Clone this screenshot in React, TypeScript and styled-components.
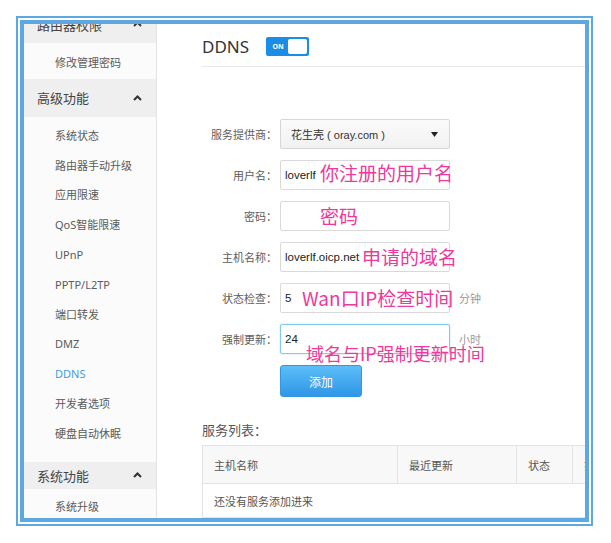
import React from "react";
import styled, { createGlobalStyle } from "styled-components";

const GlobalStyle = createGlobalStyle`
  html, body {
    margin: 0;
    padding: 0;
    background: #fff;
  }
  body {
    font-family: "Noto Sans", "Noto Sans CJK SC", sans-serif;
  }
  * {
    box-sizing: border-box;
  }
`;

const Frame = styled.div`
  margin: 16px 0 0 16px;
  width: 577px;
  height: 510px;
  border: 2px solid #5ca8e3;
  padding: 2px;
  background: #fff;
`;

const Screen = styled.div`
  height: 100%;
  border: 4px solid #5ca8e3;
  display: flex;
  overflow: hidden;
`;

const Sidebar = styled.nav`
  width: 133px;
  flex: none;
  border-right: 1px solid #e4e4e4;
  background: #fbfbfb;
  overflow: hidden;
`;

const MenuList = styled.div`
  margin-top: -19px;
`;

const GroupHead = styled.div<{ $h: number }>`
  height: ${(p) => p.$h}px;
  background: #efefef;
  display: flex;
  align-items: center;
  justify-content: space-between;
  padding: 0 14px 0 13px;
  font-family: "Noto Sans CJK SC", sans-serif;
  font-size: 13px;
  color: #444;
`;

const SubList = styled.div<{ $pt: number; $pb: number }>`
  padding: ${(p) => p.$pt}px 0 ${(p) => p.$pb}px;
`;

const SubItem = styled.div<{ $active?: boolean }>`
  height: 29.8px;
  line-height: 29.8px;
  padding-left: 31px;
  font-family: "Noto Sans", "Noto Sans CJK SC", sans-serif;
  font-size: 11px;
  color: ${(p) => (p.$active ? "#3b9be6" : "#5a5a5a")};
`;

const Main = styled.main`
  flex: 1;
  min-width: 0;
  padding-left: 45px;
  overflow: hidden;
`;

const TitleBar = styled.div`
  height: 43px;
  display: flex;
  align-items: center;
  gap: 17px;
  padding-top: 2px;
  border-bottom: 1px solid #e8e8e8;
`;

const Title = styled.h1`
  margin: 0;
  font-family: "Noto Sans", sans-serif;
  font-size: 17px;
  font-weight: 400;
  color: #333;
`;

const Toggle = styled.div`
  width: 43px;
  height: 19px;
  background: #1c8de6;
  border-radius: 2px;
  display: flex;
  align-items: center;
  padding: 2px;
`;

const ToggleText = styled.span`
  width: 20px;
  text-align: center;
  font-family: "Noto Sans", sans-serif;
  font-size: 7px;
  font-weight: 700;
  color: #fff;
`;

const Knob = styled.span`
  flex: 1;
  align-self: stretch;
  background: #fff;
  border-radius: 2px;
`;

const Form = styled.div`
  margin-top: 52px;
  display: flex;
  flex-direction: column;
  gap: 11px;
`;

const Row = styled.div`
  height: 30px;
  display: flex;
  align-items: center;
`;

const Label = styled.label`
  width: 75px;
  text-align: right;
  font-family: "Noto Sans CJK SC", sans-serif;
  font-size: 11px;
  color: #5c5c5c;
`;

const Field = styled.div`
  position: relative;
  width: 170px;
  height: 100%;
  margin-left: 3px;
`;

const Input = styled.div<{ $focus?: boolean }>`
  height: 100%;
  border: 1px solid ${(p) => (p.$focus ? "#82cdec" : "#d9d9d9")};
  box-shadow: ${(p) => (p.$focus ? "0 0 2px rgba(102,175,233,0.5)" : "none")};
  border-radius: 2px;
  background: #fff;
  padding-left: 4px;
  display: flex;
  align-items: center;
  font-family: "Liberation Sans", sans-serif;
  font-size: 11.5px;
  color: #222;
`;

const Select = styled.div`
  height: 100%;
  border: 1px solid #d6d6d6;
  border-radius: 2px;
  background: linear-gradient(#fbfbfb, #f1f1f1);
  padding: 0 11px 0 10px;
  display: flex;
  align-items: center;
  justify-content: space-between;
  font-family: "Liberation Sans", "Noto Sans CJK SC", sans-serif;
  font-size: 11px;
  color: #333;
`;

const Note = styled.span<{ $x: number; $dy: number; $size?: number }>`
  position: absolute;
  left: ${(p) => p.$x}px;
  top: calc(50% - 10px + ${(p) => p.$dy}px);
  white-space: nowrap;
  font-family: "Noto Sans CJK SC", sans-serif;
  font-size: ${(p) => p.$size ?? 19}px;
  line-height: 20px;
  color: #f0379b;
`;

const Unit = styled.span`
  margin-left: 9px;
  font-family: "Noto Sans CJK SC", sans-serif;
  font-size: 11px;
  color: #999;
`;

const ButtonRow = styled.div`
  padding-left: 78px;
`;

const Button = styled.button`
  width: 82px;
  height: 32px;
  border: 1px solid #3196e4;
  border-radius: 3px;
  background: linear-gradient(#5cbef9, #3096e6);
  font-family: "Noto Sans CJK SC", sans-serif;
  font-size: 12px;
  color: #fff;
`;

const ListTitle = styled.div`
  margin: 23px 0 5px;
  line-height: 20px;
  font-family: "Noto Sans CJK SC", sans-serif;
  font-size: 13px;
  color: #555;
`;

const Table = styled.table`
  width: 440px;
  table-layout: fixed;
  border-collapse: collapse;
  border: 1px solid #e3e3e3;
  font-family: "Noto Sans CJK SC", sans-serif;
  font-size: 11px;
  color: #555;
`;

const Th = styled.th<{ $w: number }>`
  width: ${(p) => p.$w}px;
  height: 38px;
  padding-left: 11px;
  text-align: left;
  font-weight: 400;
  background: #f8f8f8;
  border: 1px solid #e3e3e3;
`;

const Td = styled.td`
  height: 34px;
  padding-left: 11px;
`;

const Caret = () => (
  <svg width="9" height="6" viewBox="0 0 9 6">
    <path d="M1 5 L4.5 1.5 L8 5" fill="none" stroke="#333" strokeWidth="2" />
  </svg>
);

const Arrow = () => (
  <svg width="7" height="5" viewBox="0 0 7 5">
    <path d="M0 0 H7 L3.5 5 Z" fill="#222" />
  </svg>
);

const groups = [
  { title: "路由器权限", h: 38, pt: 5, pb: 1, items: ["修改管理密码"] },
  {
    title: "高级功能",
    h: 38,
    pt: 4,
    pb: 13,
    items: [
      "系统状态",
      "路由器手动升级",
      "应用限速",
      "QoS智能限速",
      "UPnP",
      "PPTP/L2TP",
      "端口转发",
      "DMZ",
      "DDNS",
      "开发者选项",
      "硬盘自动休眠",
    ],
  },
  { title: "系统功能", h: 27, pt: 3, pb: 0, items: ["系统升级"] },
];

function App() {
  return (
    <>
      <GlobalStyle />
      <Frame>
        <Screen>
          <Sidebar>
            <MenuList>
              {groups.map((g) => (
                <div key={g.title}>
                  <GroupHead $h={g.h}>
                    {g.title}
                    <Caret />
                  </GroupHead>
                  <SubList $pt={g.pt} $pb={g.pb}>
                    {g.items.map((it) => (
                      <SubItem key={it} $active={it === "DDNS"}>
                        {it}
                      </SubItem>
                    ))}
                  </SubList>
                </div>
              ))}
            </MenuList>
          </Sidebar>
          <Main>
            <TitleBar>
              <Title>DDNS</Title>
              <Toggle>
                <ToggleText>ON</ToggleText>
                <Knob />
              </Toggle>
            </TitleBar>
            <Form>
              <Row>
                <Label>服务提供商：</Label>
                <Field>
                  <Select>
                    花生壳 ( oray.com )
                    <Arrow />
                  </Select>
                </Field>
              </Row>
              <Row>
                <Label>用户名：</Label>
                <Field>
                  <Input>loverlf</Input>
                  <Note $x={40} $dy={-2}>你注册的用户名</Note>
                </Field>
              </Row>
              <Row>
                <Label>密码：</Label>
                <Field>
                  <Input />
                  <Note $x={40} $dy={0}>密码</Note>
                </Field>
              </Row>
              <Row>
                <Label>主机名称：</Label>
                <Field>
                  <Input>loverlf.oicp.net</Input>
                  <Note $x={82} $dy={0}>申请的域名</Note>
                </Field>
              </Row>
              <Row>
                <Label>状态检查：</Label>
                <Field>
                  <Input>5</Input>
                  <Note $x={22} $dy={0}>Wan口IP检查时间</Note>
                </Field>
                <Unit>分钟</Unit>
              </Row>
              <Row>
                <Label>强制更新：</Label>
                <Field>
                  <Input $focus>24</Input>
                  <Note $x={26} $dy={14} $size={18}>
                    域名与IP强制更新时间
                  </Note>
                </Field>
                <Unit>小时</Unit>
              </Row>
              <ButtonRow>
                <Button>添加</Button>
              </ButtonRow>
            </Form>
            <ListTitle>服务列表：</ListTitle>
            <Table>
              <thead>
                <tr>
                  <Th $w={195}>主机名称</Th>
                  <Th $w={119}>最近更新</Th>
                  <Th $w={56}>状态</Th>
                  <Th $w={70}>操作</Th>
                </tr>
              </thead>
              <tbody>
                <tr>
                  <Td colSpan={4}>还没有服务添加进来</Td>
                </tr>
              </tbody>
            </Table>
          </Main>
        </Screen>
      </Frame>
    </>
  );
}

export default App;
